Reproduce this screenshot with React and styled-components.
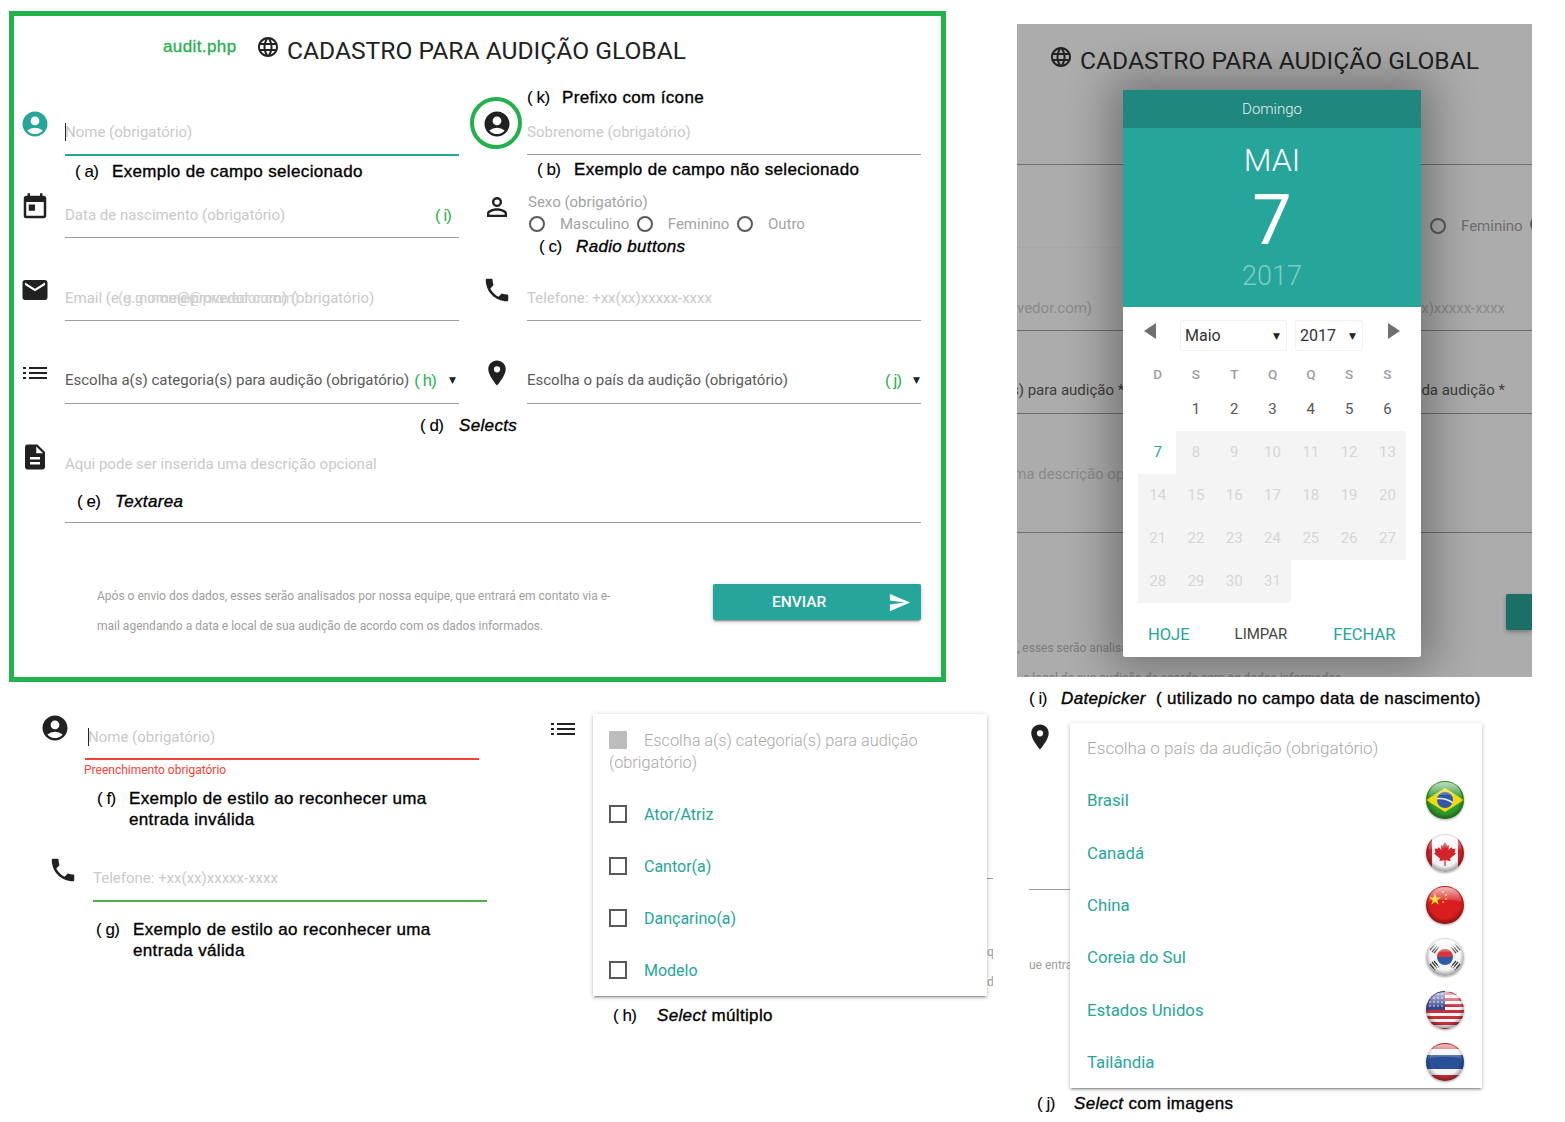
import React from 'react';
import styled, { createGlobalStyle } from 'styled-components';
import {
  MdAccountCircle, MdToday, MdEmail, MdPhone, MdLocationOn, MdDescription,
  MdPersonOutline, MdLanguage, MdSend,
} from 'react-icons/md';

const TEAL = '#26a69a';
const GREEN = '#22b14c';

const GlobalStyle = createGlobalStyle`
  html, body { margin: 0; padding: 0; background: #fff; }
  body { font-family: Roboto, "Liberation Sans", sans-serif; }
  * { box-sizing: border-box; }
`;

const Page = styled.div`
  display: flex;
  width: 1565px;
  height: 1122px;
  padding: 11px 0 0 9px;
  overflow: hidden;
`;

const LeftSide = styled.div`
  width: 978px;
  flex: none;
`;

const RightSide = styled.div`
  width: 530px;
  margin: 13px 0 0 30px;
  flex: none;
`;

/* main form */
const FormPanel = styled.div`
  width: 937px;
  height: 671px;
  border: 5px solid ${GREEN};
  padding: 0 20px 0 6px;
`;

const Header = styled.div`
  display: flex;
  align-items: center;
  height: 68px;
  padding-left: 143px;
`;

const AppName = styled.span`
  font: 17px "Liberation Sans", sans-serif;
  letter-spacing: 0.4px;
  -webkit-text-stroke: 0.3px ${GREEN};
  color: ${GREEN};
  width: 93px;
  margin-top: -6px;
  flex: none;
`;

const Globe = styled(MdLanguage)`
  width: 24px;
  height: 24px;
  color: #212121;
  margin: -6px 7px 0 0;
  flex: none;
`;

const Title = styled.h1`
  margin: 2px 0 0;
  font: 400 24.6px/32px Roboto, sans-serif;
  color: #212121;
  white-space: nowrap;
`;

const Columns = styled.div`
  display: grid;
  grid-template-columns: 439px 439px;
  column-gap: 23px;
`;

const Column = styled.div`
  padding-top: ${(p) => p.$pt || 0}px;
`;

const Field = styled.div`
  display: grid;
  grid-template-columns: 45px ${(p) => p.$w || 394}px;
  margin: ${(p) => p.$mt || 0}px 0 0 ${(p) => p.$ml || 0}px;
`;

const IconBox = styled.div`
  position: relative;
  width: 30px;
  height: 30px;
  margin-top: ${(p) => p.$mt ?? -1}px;
  margin-right: ${(p) => p.$mr || 0}px;
  flex: none;
  color: ${(p) => p.$color || '#212121'};
  svg { display: block; width: 30px; height: 30px; }
`;

const ListSlot = styled.div`
  margin-top: -1px;
  padding-left: 3px;
`;

const Ring = styled.span`
  position: absolute;
  left: -12px;
  top: -12px;
  width: 52px;
  height: 52px;
  border: 4px solid ${GREEN};
  border-radius: 50%;
`;

const Input = styled.div`
  display: flex;
  align-items: center;
  height: ${(p) => (p.$line ? 46 : 45)}px;
  padding: ${(p) => p.$pt || 0}px ${(p) => p.$pr || 0}px ${(p) => (p.$value ? 2 : 0)}px ${(p) => p.$pl || 0}px;
  border-bottom: ${(p) => (p.$line ? `2px solid ${p.$line}` : '1px solid #9e9e9e')};
  font-size: 15px;
  color: ${(p) => (p.$value ? '#5a5a5a' : '#c9c9c9')};
  white-space: nowrap;
`;

const TextCaret = styled.i`
  display: inline-block;
  width: 1px;
  height: 18px;
  background: #222;
  margin-right: -1px;
  flex: none;
`;

const GreenTag = styled.span`
  font: 16.5px "Liberation Sans", sans-serif;
  letter-spacing: -0.8px;
  color: ${GREEN};
  margin-left: ${(p) => (p.$push ? 'auto' : `${p.$ml || 0}px`)};
`;

const SelectCaret = styled.span`
  font: 9px "DejaVu Sans", sans-serif;
  color: #222;
  margin-left: ${(p) => p.$ml || 0}px;
`;

const EmailHint = styled.span`
  position: relative;
  display: inline-block;
`;

const EmailGhost = styled.span`
  position: absolute;
  left: 53px;
  top: 0;
  color: #d2d2d2;
`;

const Note = styled.div`
  display: grid;
  grid-template-columns: ${(p) => p.$tag}px max-content;
  margin: ${(p) => p.$mt || 0}px 0 0 ${(p) => p.$ml || 0}px;
  font: 17px/${(p) => p.$lh || 20}px "Liberation Sans", sans-serif;
  letter-spacing: 0.35px;
  color: #000;
  -webkit-text-stroke: 0.35px #000;
  white-space: nowrap;
  transform: translateY(1px);
`;

const NoteTag = styled.span`
  letter-spacing: -0.5px;
  -webkit-text-stroke: 0.1px #000;
`;

const SexLabel = styled.div`
  margin: 13px 0 0 1px;
  font: 15px/20px Roboto, sans-serif;
  color: #a3a3a3;
`;

const RadioRow = styled.div`
  display: flex;
  gap: 7.5px;
  margin: 2px 0 0 2px;
`;

const RadioItem = styled.label`
  display: flex;
  align-items: center;
  gap: 15px;
  font: 15px/20px Roboto, sans-serif;
  color: ${(p) => p.$color || '#a3a3a3'};
`;

const RadioCircle = styled.i`
  display: block;
  width: 16px;
  height: 16px;
  border: 2px solid #5a5a5a;
  border-radius: 50%;
  flex: none;
`;

const AreaBox = styled.div`
  height: 81px;
  border-bottom: 1px solid #9e9e9e;
  font-size: 15px;
  color: #c9c9c9;
`;

const AreaHint = styled.div`
  line-height: 44px;
`;

const SubmitRow = styled.div`
  display: flex;
  justify-content: space-between;
  margin-top: 61px;
  padding-left: 77px;
`;

const Disclaimer = styled.p`
  width: 522px;
  margin: -3px 0 0;
  font: 12px/30px Roboto, sans-serif;
  color: #9e9e9e;
`;

const SendButton = styled.button`
  display: flex;
  align-items: center;
  justify-content: space-between;
  width: 208px;
  height: 36px;
  padding: 0 10px 0 59px;
  border: 0;
  border-radius: 2px;
  background: ${TEAL};
  color: #fff;
  font: 500 15.5px Roboto, sans-serif;
  box-shadow: 0 2px 2px rgba(0,0,0,.14), 0 3px 1px -2px rgba(0,0,0,.2), 0 1px 5px rgba(0,0,0,.2);
  svg { width: 23px; height: 23px; }
`;

/* validation examples and multi select */
const BottomRow = styled.div`
  display: flex;
`;

const Examples = styled.div`
  width: 542px;
  padding: 32px 0 0 31px;
  flex: none;
`;

const ErrorText = styled.div`
  margin: 2px 0 0 44px;
  font: 12px/16px Roboto, sans-serif;
  color: #f44336;
`;

const MultiBlock = styled.div`
  display: flex;
  padding-top: 32px;
`;

const ListIcon = styled.svg`
  display: block;
  width: 24px;
  height: 14px;
  margin: 8px 18px 0 0;
  flex: none;
`;

const DropColumn = styled.div`
  position: relative;
`;

const Dropdown = styled.div`
  position: relative;
  width: ${(p) => p.$w}px;
  background: #fff;
  box-shadow: 0 2px 2px rgba(0,0,0,.14), 0 3px 1px -2px rgba(0,0,0,.2), 0 1px 5px rgba(0,0,0,.2);
  font-size: ${(p) => p.$fs}px;
`;

const MultiHead = styled.div`
  height: 74px;
  padding: 16px 16px 0;
  font-size: 16.3px;
  line-height: 22px;
  font-weight: 300;
  color: #a8a8a8;
`;

const GreyBox = styled.i`
  display: inline-block;
  width: 18px;
  height: 18px;
  margin-right: 17px;
  background: #bdbdbd;
  vertical-align: -3px;
`;

const MultiItem = styled.div`
  display: flex;
  align-items: center;
  gap: 17px;
  height: 52px;
  padding-left: 16px;
  color: ${TEAL};
`;

const CheckBox = styled.i`
  display: block;
  width: 18px;
  height: 18px;
  border: 2px solid #5a5a5a;
`;

const PeekBehind = styled.div`
  position: absolute;
  left: ${(p) => p.$left}px;
  top: ${(p) => p.$top}px;
  width: ${(p) => p.$w}px;
  overflow: hidden;
  font: 12px/16px Roboto, sans-serif;
  color: #9e9e9e;
  white-space: nowrap;
  border-top: ${(p) => (p.$rule ? '1px solid #9e9e9e' : '0')};
  height: ${(p) => (p.$rule ? 1 : 16)}px;
`;

/* datepicker shot */
const Shot = styled.div`
  position: relative;
  display: flex;
  flex-direction: column;
  width: 515px;
  height: 653px;
  overflow: hidden;
  background: #acacac;
  color: #8a8a8a;
  font-size: 15px;
`;

const ShotTitle = styled.div`
  display: flex;
  align-items: center;
  flex: none;
  height: 141px;
  padding: 0 0 68px 32px;
  border-bottom: 1px solid #6d6d6d;
  color: #212121;
`;

const ShotRow = styled.div`
  display: flex;
  flex: none;
  justify-content: space-between;
  height: ${(p) => p.$h}px;
  padding: ${(p) => p.$pt}px 27px 0 0;
  border-bottom: 1px solid ${(p) => p.$rule || '#6d6d6d'};
  color: ${(p) => p.$color || '#8a8a8a'};
  line-height: 20px;
`;

const SexRow = styled.div`
  display: flex;
  flex: none;
  height: 83px;
`;

const FaintRule = styled.div`
  width: 106px;
  flex: none;
  border-bottom: 1px solid #a3a9ac;
`;

const ShotRadios = styled.div`
  display: flex;
  gap: 7px;
  align-self: flex-start;
  margin: 51px 0 0 307px;
  white-space: nowrap;
`;

const ClipText = styled.span`
  margin: ${(p) => p.$mt || 0}px 0 0 ${(p) => p.$ml || 0}px;
  white-space: nowrap;
`;

const ShotFoot = styled.div`
  display: flex;
  flex-direction: column;
  flex: none;
  font: 12px/16px Roboto, sans-serif;
  color: #7d7d7d;
  white-space: nowrap;
`;

const DarkButton = styled.div`
  align-self: flex-end;
  width: 26px;
  height: 36px;
  margin-top: 61px;
  border-radius: 2px 0 0 2px;
  background: #1c6f67;
  box-shadow: 0 2px 4px rgba(0,0,0,.3);
`;

const Dialog = styled.div`
  position: absolute;
  left: 106px;
  top: 66px;
  width: 298px;
  height: 567px;
  border-radius: 2px;
  background: #fff;
  box-shadow: 0 0 45px 12px rgba(0,0,0,.33);
`;

const DayName = styled.div`
  height: 38px;
  background: #1f877e;
  color: #e4f2f1;
  font: 300 15px/38px Roboto, sans-serif;
  text-align: center;
`;

const Banner = styled.div`
  display: flex;
  flex-direction: column;
  align-items: center;
  height: 179px;
  padding-top: 12px;
  background: ${TEAL};
  color: #fff;
`;

const Month = styled.div`
  font: 300 32px/40px Roboto, sans-serif;
`;

const DayNumber = styled.div`
  margin-top: 4px;
  font: 400 70px/72px Roboto, sans-serif;
`;

const YearText = styled.div`
  margin-top: 3px;
  font: 300 27px/34px Roboto, sans-serif;
  color: #7dcdc5;
`;

const Nav = styled.div`
  display: flex;
  align-items: flex-start;
  padding: 13px 0 0 21px;
`;

const Arrow = styled.i`
  display: block;
  width: 0;
  height: 0;
  margin: ${(p) => (p.$right ? '3px 0 0 25px' : '3px 24px 0 0')};
  border-top: 8px solid transparent;
  border-bottom: 8px solid transparent;
  border-left: ${(p) => (p.$right ? '12px solid #6f6f6f' : '0')};
  border-right: ${(p) => (p.$right ? '0' : '12px solid #6f6f6f')};
`;

const MiniSelect = styled.div`
  display: flex;
  align-items: center;
  justify-content: space-between;
  width: ${(p) => p.$w}px;
  height: 31px;
  margin-right: ${(p) => p.$mr || 0}px;
  padding: 0 6px 0 4px;
  border: 1px solid #f2f2f2;
  border-radius: 2px;
  font-size: 16px;
  color: #333;
`;

const CalGrid = styled.div`
  display: grid;
  grid-template-columns: repeat(7, 38.3px);
  grid-template-rows: 28px repeat(5, 43px);
  margin: 9px 0 0 15px;
`;

const WeekCell = styled.div`
  display: flex;
  align-items: center;
  justify-content: center;
  padding-left: 1px;
  font-weight: 500;
  font-size: 13.5px;
  color: #9e9e9e;
`;

const DayCell = styled.div`
  display: flex;
  align-items: center;
  justify-content: center;
  padding: 0 0 2px 1px;
  font-size: 15px;
  background: ${(p) => (p.$off ? '#f4f4f4' : 'transparent')};
  color: ${(p) => (p.$off ? '#d6d6d6' : p.$today ? TEAL : '#555')};
`;

const DialogFoot = styled.div`
  display: flex;
  align-items: center;
  height: 54px;
  padding: 8px 0 0 25px;
`;

const FootLink = styled.span`
  font-size: ${(p) => (p.$plain ? 15 : 16.5)}px;
  color: ${(p) => (p.$plain ? '#444' : TEAL)};
  margin-right: ${(p) => p.$mr || 0}px;
`;

/* country select */
const CountryBlock = styled.div`
  display: flex;
  margin: 15px 0 0 8px;
`;

const CountryHead = styled.div`
  height: 51px;
  padding: 0 17px;
  font-size: 17.1px;
  line-height: 50px;
  font-weight: 300;
  color: #a8a8a8;
`;

const CountryItem = styled.div`
  display: flex;
  align-items: center;
  justify-content: space-between;
  height: 52.4px;
  padding: 0 17px;
  color: ${TEAL};
`;

const FlagSvg = styled.svg`
  display: block;
  width: 40px;
  height: 40px;
  filter: drop-shadow(0 1px 1px rgba(0,0,0,.35));
`;

const Flag = ({ id, children }) => (
  <FlagSvg viewBox="0 0 40 40">
    <defs>
      <clipPath id={`clip-${id}`}><circle cx="20" cy="20" r="19" /></clipPath>
      <radialGradient id={`edge-${id}`} cx="50%" cy="45%" r="55%">
        <stop offset="72%" stopColor="#000" stopOpacity="0" />
        <stop offset="100%" stopColor="#000" stopOpacity=".38" />
      </radialGradient>
      <linearGradient id={`gloss-${id}`} x1="0" y1="0" x2="0" y2="1">
        <stop offset="0%" stopColor="#fff" stopOpacity=".7" />
        <stop offset="100%" stopColor="#fff" stopOpacity=".08" />
      </linearGradient>
    </defs>
    <g clipPath={`url(#clip-${id})`}>
      {children}
      <circle cx="20" cy="20" r="19" fill={`url(#edge-${id})`} />
      <path d="M3 17C4 7 11 2 20 2s16 5 17 15c-10-3-24-3-34 0z" fill={`url(#gloss-${id})`} />
    </g>
  </FlagSvg>
);

const flags = {
  brasil: (
    <>
      <rect width="40" height="40" fill="#2f9a2c" />
      <path d="M1 20L20 8l19 12-19 12z" fill="#f4d90e" />
      <circle cx="20" cy="20" r="8" fill="#2f57ae" />
      <path d="M12 18c6-1 12 1 16 4l-.6 1.600c-4-3-10-5-15.400-4z" fill="#eee" />
    </>
  ),
  canada: (
    <>
      <rect width="40" height="40" fill="#f4f4f4" />
      <rect width="7" height="40" fill="#c9222b" />
      <rect x="33" width="7" height="40" fill="#c9222b" />
      <path d="M20 9l2.300 4 2-1-.8 5 3-3 1 2 3-.5-1 4 1.500 1-6 5 .6 2.500-5-.7V33h-1.200v-5.700l-5 .7.6-2.500-6-5 1.500-1-1-4 3 .5 1-2 3 3-.8-5 2 1z" fill="#d3222b" />
    </>
  ),
  china: (
    <>
      <rect width="40" height="40" fill="#d81e1e" />
      <path d="M10 8l1.500 4.500H16l-3.600 2.800 1.300 4.500L10 17l-3.700 2.800 1.300-4.500L4 12.500h4.500z" fill="#f7d417" />
      <circle cx="18" cy="7" r="1" fill="#f7d417" />
      <circle cx="21" cy="10" r="1" fill="#f7d417" />
      <circle cx="21" cy="14" r="1" fill="#f7d417" />
      <circle cx="18" cy="17" r="1" fill="#f7d417" />
    </>
  ),
  coreia: (
    <>
      <rect width="40" height="40" fill="#f5f5f5" />
      <path d="M12 20a8 8 0 0 1 16 0z" fill="#d8343c" />
      <path d="M12 20a8 8 0 0 0 16 0z" fill="#2a5aa8" />
      <g stroke="#333" strokeWidth="1.200" strokeDasharray="6 1">
        <path d="M5 13l5-6M7 15l5-6M9 16l5-6" />
        <path d="M35 13l-5-6M33 15l-5-6M31 16l-5-6" />
        <path d="M5 27l5 6M7 25l5 6M9 24l5 6" />
        <path d="M35 27l-5 6M33 25l-5 6M31 24l-5 6" />
      </g>
    </>
  ),
  eua: (
    <>
      <rect width="40" height="40" fill="#f4f4f4" />
      {[2, 8, 14, 20, 26, 32, 38].map((y) => <rect key={y} y={y} width="40" height="3" fill="#c8313a" />)}
      <rect width="20" height="20" fill="#37478f" />
      {[4, 8, 12, 16].map((y) => [5, 9, 13, 17].map((x) => <circle key={`${x}-${y}`} cx={x} cy={y} r=".8" fill="#fff" />))}
    </>
  ),
  tailandia: (
    <>
      <rect width="40" height="40" fill="#f4f4f4" />
      <rect width="40" height="7" fill="#c62f36" />
      <rect y="33" width="40" height="7" fill="#c62f36" />
      <rect y="13" width="40" height="14" fill="#2a4f96" />
    </>
  ),
};

const weekDays = ['D', 'S', 'T', 'Q', 'Q', 'S', 'S'];
const countries = [
  ['Brasil', 'brasil'], ['Canadá', 'canada'], ['China', 'china'],
  ['Coreia do Sul', 'coreia'], ['Estados Unidos', 'eua'], ['Tailândia', 'tailandia'],
];

const listIcon = (
  <ListIcon viewBox="0 0 24 14">
    {[1, 6, 11].map((y) => (
      <g key={y} fill="#212121">
        <rect x="0" y={y} width="3" height="2" />
        <rect x="6" y={y} width="18" height="2" />
      </g>
    ))}
  </ListIcon>
);

const App = () => (
  <Page>
    <GlobalStyle />
    <LeftSide>
      <FormPanel>
        <Header>
          <AppName>audit.php</AppName>
          <Globe />
          <Title>CADASTRO PARA AUDIÇÃO GLOBAL</Title>
        </Header>
        <Columns>
          <Column $pt={26}>
            <Field>
              <IconBox $color={TEAL}><MdAccountCircle /></IconBox>
              <Input $line={TEAL}><TextCaret />Nome (obrigatório)</Input>
            </Field>
            <Note $mt={5} $ml={55} $tag={37}><NoteTag>( a)</NoteTag><span>Exemplo de campo selecionado</span></Note>
            <Field $mt={12}>
              <IconBox><MdToday /></IconBox>
              <Input $pr={8}>
                Data de nascimento (obrigatório)
                <GreenTag $push>( i)</GreenTag>
              </Input>
            </Field>
            <Field $mt={38}>
              <IconBox><MdEmail /></IconBox>
              <Input>
                <EmailHint>
                  Email (e.g.:nome@provedor.com) (obrigatório)
                  <EmailGhost>(e.g.:nome@provedor.com)</EmailGhost>
                </EmailHint>
              </Input>
            </Field>
            <Field $mt={38}>
              <ListSlot>{listIcon}</ListSlot>
              <Input $value>
                Escolha a(s) categoria(s) para audição (obrigatório)
                <GreenTag $ml={5}>( h)</GreenTag>
                <SelectCaret $ml={13}>▼</SelectCaret>
              </Input>
            </Field>
          </Column>
          <Column>
            <Note $mt={3} $ml={45} $tag={35}><NoteTag>( k)</NoteTag><span>Prefixo com ícone</span></Note>
            <Field $mt={3}>
              <IconBox><Ring /><MdAccountCircle /></IconBox>
              <Input>Sobrenome (obrigatório)</Input>
            </Field>
            <Note $mt={4} $ml={55} $tag={37}><NoteTag>( b)</NoteTag><span>Exemplo de campo não selecionado</span></Note>
            <Field>
              <IconBox $mt={13}><MdPersonOutline /></IconBox>
              <div>
                <SexLabel>Sexo (obrigatório)</SexLabel>
                <RadioRow>
                  <RadioItem><RadioCircle />Masculino</RadioItem>
                  <RadioItem><RadioCircle />Feminino</RadioItem>
                  <RadioItem><RadioCircle />Outro</RadioItem>
                </RadioRow>
              </div>
            </Field>
            <Note $mt={2} $ml={57} $tag={37}><NoteTag>( c)</NoteTag><em>Radio buttons</em></Note>
            <Field $mt={20}>
              <IconBox><MdPhone /></IconBox>
              <Input>Telefone: +xx(xx)xxxxx-xxxx</Input>
            </Field>
            <Field $mt={38}>
              <IconBox><MdLocationOn /></IconBox>
              <Input $value $pr={1}>
                Escolha o país da audição (obrigatório)
                <GreenTag $push>( j)</GreenTag>
                <SelectCaret $ml={12}>▼</SelectCaret>
              </Input>
            </Field>
          </Column>
        </Columns>
        <Note $mt={11} $ml={400} $tag={39}><NoteTag>( d)</NoteTag><em>Selects</em></Note>
        <Field $mt={7} $w={856}>
          <IconBox $mt={0}><MdDescription /></IconBox>
          <AreaBox>
            <AreaHint>Aqui pode ser inserida uma descrição opcional</AreaHint>
            <Note $mt={5} $ml={12} $tag={38}><NoteTag>( e)</NoteTag><em>Textarea</em></Note>
          </AreaBox>
        </Field>
        <SubmitRow>
          <Disclaimer>
            Após o envio dos dados, esses serão analisados por nossa equipe, que entrará em contato via e-mail agendando a data e local de sua audição de acordo com os dados informados.
          </Disclaimer>
          <SendButton>ENVIAR<MdSend /></SendButton>
        </SubmitRow>
      </FormPanel>
      <BottomRow>
        <Examples>
          <Field>
            <IconBox><MdAccountCircle /></IconBox>
            <Input $line="#f44336" $pl={3} $pt={1}><TextCaret />Nome (obrigatório)</Input>
          </Field>
          <ErrorText>Preenchimento obrigatório</ErrorText>
          <Note $mt={9} $ml={57} $tag={32} $lh={21}>
            <NoteTag>( f)</NoteTag>
            <span>Exemplo de estilo ao reconhecer uma<br />entrada inválida</span>
          </Note>
          <Field $mt={27} $ml={8}>
            <IconBox><MdPhone /></IconBox>
            <Input $line="#4caf50">Telefone: +xx(xx)xxxxx-xxxx</Input>
          </Field>
          <Note $mt={16} $ml={56} $tag={37} $lh={21}>
            <NoteTag>( g)</NoteTag>
            <span>Exemplo de estilo ao reconhecer uma<br />entrada válida</span>
          </Note>
        </Examples>
        <MultiBlock>
          {listIcon}
          <DropColumn>
            <PeekBehind $left={394} $top={164} $w={6} $rule />
            <PeekBehind $left={394} $top={230} $w={6}>qu</PeekBehind>
            <PeekBehind $left={394} $top={260} $w={6}>do</PeekBehind>
            <Dropdown $w={394} $fs={16}>
              <MultiHead><GreyBox />Escolha a(s) categoria(s) para audição (obrigatório)</MultiHead>
              {['Ator/Atriz', 'Cantor(a)', 'Dançarino(a)', 'Modelo'].map((item) => (
                <MultiItem key={item}><CheckBox />{item}</MultiItem>
              ))}
            </Dropdown>
            <Note $mt={9} $ml={20} $tag={44}><NoteTag>( h)</NoteTag><span><em>Select</em> múltiplo</span></Note>
          </DropColumn>
        </MultiBlock>
      </BottomRow>
    </LeftSide>
    <RightSide>
      <Shot>
        <ShotTitle><Globe /><Title>CADASTRO PARA AUDIÇÃO GLOBAL</Title></ShotTitle>
        <SexRow>
          <FaintRule />
          <ShotRadios>
            <RadioItem $color="#6e6e6e"><RadioCircle />Feminino</RadioItem>
            <RadioCircle />
          </ShotRadios>
        </SexRow>
        <ShotRow $h={83} $pt={50}><span>vedor.com)</span><span>x)xxxxx-xxxx</span></ShotRow>
        <ShotRow $h={83} $pt={49} $color="#3c3c3c">
          <ClipText $ml={-6}>s) para audição *</ClipText>
          <span>da audição *</span>
        </ShotRow>
        <ShotRow $h={119} $pt={50}><ClipText $ml={-12}>uma descrição opcional</ClipText></ShotRow>
        <ShotFoot>
          <DarkButton />
          <ClipText $mt={10}>, esses serão analisados por nossa equipe</ClipText>
          <ClipText $mt={14} $ml={6}>e local de sua audição de acordo com os dados informados.</ClipText>
        </ShotFoot>
        <Dialog>
          <DayName>Domingo</DayName>
          <Banner>
            <Month>MAI</Month>
            <DayNumber>7</DayNumber>
            <YearText>2017</YearText>
          </Banner>
          <Nav>
            <Arrow />
            <MiniSelect $w={107} $mr={8}>Maio<SelectCaret>▼</SelectCaret></MiniSelect>
            <MiniSelect $w={68}>2017<SelectCaret>▼</SelectCaret></MiniSelect>
            <Arrow $right />
          </Nav>
          <CalGrid>
            {weekDays.map((d, i) => <WeekCell key={`${d}${i}`}>{d}</WeekCell>)}
            <DayCell />
            {[1, 2, 3, 4, 5, 6].map((n) => <DayCell key={n}>{n}</DayCell>)}
            <DayCell $today>7</DayCell>
            {Array.from({ length: 24 }, (_, i) => i + 8).map((n) => <DayCell key={n} $off>{n}</DayCell>)}
          </CalGrid>
          <DialogFoot>
            <FootLink $mr={45}>HOJE</FootLink>
            <FootLink $plain $mr={46}>LIMPAR</FootLink>
            <FootLink>FECHAR</FootLink>
          </DialogFoot>
        </Dialog>
      </Shot>
      <Note $mt={11} $ml={12} $tag={32}>
        <NoteTag>( i)</NoteTag>
        <span><em>Datepicker</em>&nbsp;&nbsp;( utilizado no campo data de nascimento)</span>
      </Note>
      <CountryBlock>
        <IconBox $mr={15}><MdLocationOn /></IconBox>
        <DropColumn>
          <PeekBehind $left={-41} $top={166} $w={41} $rule />
          <PeekBehind $left={-41} $top={234} $w={41}>ue entrará</PeekBehind>
          <Dropdown $w={412} $fs={16.8}>
            <CountryHead>Escolha o país da audição (obrigatório)</CountryHead>
            {countries.map(([name, key]) => (
              <CountryItem key={key}>{name}<Flag id={key}>{flags[key]}</Flag></CountryItem>
            ))}
          </Dropdown>
          <Note $mt={5} $ml={-33} $tag={37}><NoteTag>( j)</NoteTag><span><em>Select</em> com imagens</span></Note>
        </DropColumn>
      </CountryBlock>
    </RightSide>
  </Page>
);

export default App;
